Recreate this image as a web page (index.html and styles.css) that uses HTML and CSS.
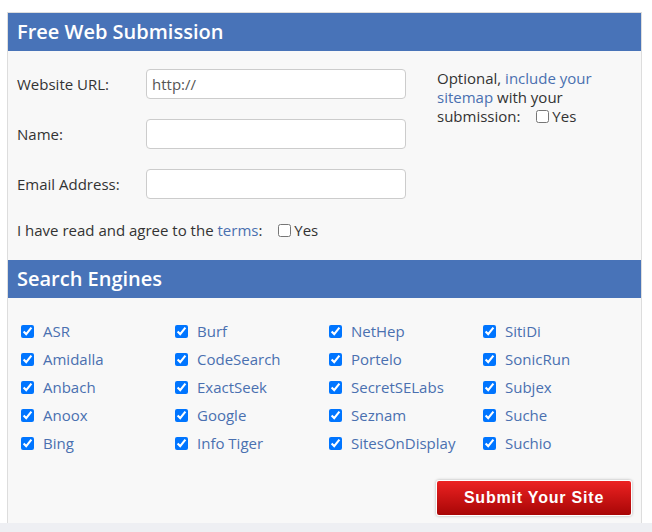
FILE: index.html
```html
<!DOCTYPE html>
<html lang="en">
<head>
    <meta charset="UTF-8">
    <title>Free Web Submission</title>
    <link rel="stylesheet" href="styles.css">
</head>
<body>
    <div id="box">
        <h2 class="bar">Free Web Submission</h2>
        <div class="info">
            <div class="fields">
                <div class="row">
                    <label>Website URL:</label>
                    <input type="text" value="http://">
                </div>
                <div class="row">
                    <label>Name:</label>
                    <input type="text">
                </div>
                <div class="row">
                    <label>Email Address:</label>
                    <input type="text">
                </div>
            </div>
            <div class="side">
                Optional, <a href="#">include your sitemap</a> with your submission:
                <span class="yes"><input type="checkbox">Yes</span>
            </div>
        </div>
        <div class="terms">
            I have read and agree to the <a href="#">terms</a>:
            <span class="yes"><input type="checkbox">Yes</span>
        </div>

        <h2 class="bar">Search Engines</h2>
        <ul class="engines">
            <li><input type="checkbox" checked><a href="#">ASR</a></li>
            <li><input type="checkbox" checked><a href="#">Burf</a></li>
            <li><input type="checkbox" checked><a href="#">NetHep</a></li>
            <li><input type="checkbox" checked><a href="#">SitiDi</a></li>
            <li><input type="checkbox" checked><a href="#">Amidalla</a></li>
            <li><input type="checkbox" checked><a href="#">CodeSearch</a></li>
            <li><input type="checkbox" checked><a href="#">Portelo</a></li>
            <li><input type="checkbox" checked><a href="#">SonicRun</a></li>
            <li><input type="checkbox" checked><a href="#">Anbach</a></li>
            <li><input type="checkbox" checked><a href="#">ExactSeek</a></li>
            <li><input type="checkbox" checked><a href="#">SecretSELabs</a></li>
            <li><input type="checkbox" checked><a href="#">Subjex</a></li>
            <li><input type="checkbox" checked><a href="#">Anoox</a></li>
            <li><input type="checkbox" checked><a href="#">Google</a></li>
            <li><input type="checkbox" checked><a href="#">Seznam</a></li>
            <li><input type="checkbox" checked><a href="#">Suche</a></li>
            <li><input type="checkbox" checked><a href="#">Bing</a></li>
            <li><input type="checkbox" checked><a href="#">Info Tiger</a></li>
            <li><input type="checkbox" checked><a href="#">SitesOnDisplay</a></li>
            <li><input type="checkbox" checked><a href="#">Suchio</a></li>
        </ul>
        <div class="send">
            <button class="submit">Submit Your Site</button>
        </div>
    </div>
    <div class="foot"></div>
</body>
</html>
```

FILE: styles.css
```css
body,h2,ul{
    margin:0;
}
ul{
    padding-left:0;
    list-style-type:none;
}
a{
    text-decoration:none;
    color:#4a70b0;
}
body{
    font-family:"Open Sans","Liberation Sans",sans-serif;
    font-size:15px;
    color:#333;
    background:#fff;
    padding-top:12px;
}
/* 外框 */
#box{
    width:633px;
    height:510px;
    margin-left:7px;
    border:1px solid #ddd;
    border-bottom:none;
    background:#f8f8f8;
    overflow:hidden;
}
.bar{
    height:38px;
    line-height:38px;
    padding-left:9px;
    background:#4873b8;
    color:#fff;
    font-size:20px;
    font-weight:600;
}
.info{
    display:flex;
    padding:18px 9px 0;
}
.fields{
    flex:none;
    width:398px;
}
.row{
    display:flex;
    align-items:center;
    height:30px;
    margin-bottom:20px;
}
.row label{
    width:129px;
}
.row input{
    width:260px;
    height:30px;
    box-sizing:border-box;
    border:1px solid #ccc;
    border-radius:4px;
    background:#fff;
    padding:0 5px;
    font-family:inherit;
    font-size:15px;
    color:#555;
    outline:none;
}
.side{
    flex:none;
    width:190px;
    margin-left:22px;
    line-height:19px;
}
.yes{
    white-space:nowrap;
    margin-left:8px;
}
.yes input{
    margin:0 3px 0 4px;
    vertical-align:-1px;
}
.terms{
    padding:0 9px;
    height:22px;
    line-height:22px;
}
.terms + .bar{
    margin-top:19px;
}
/* 搜索引擎 */
.engines{
    display:grid;
    grid-template-columns:repeat(4,154px);
    padding:19px 9px 0;
}
.engines li{
    display:flex;
    align-items:center;
    height:28px;
}
.engines input{
    margin:0 9px 0 4px;
}
.send{
    display:flex;
    justify-content:flex-end;
    padding:23px 9px 0;
}
.submit{
    width:196px;
    height:36px;
    border:1px solid #fff;
    border-radius:3px;
    background:linear-gradient(#ec2222,#a80606);
    box-shadow:0 0 3px rgba(0,0,0,.3);
    color:#fff;
    font-family:"Liberation Sans",Arial,sans-serif;
    font-size:16px;
    font-weight:bold;
    letter-spacing:.8px;
    cursor:pointer;
}
.foot{
    height:9px;
    background:#eeeff3;
}
```
